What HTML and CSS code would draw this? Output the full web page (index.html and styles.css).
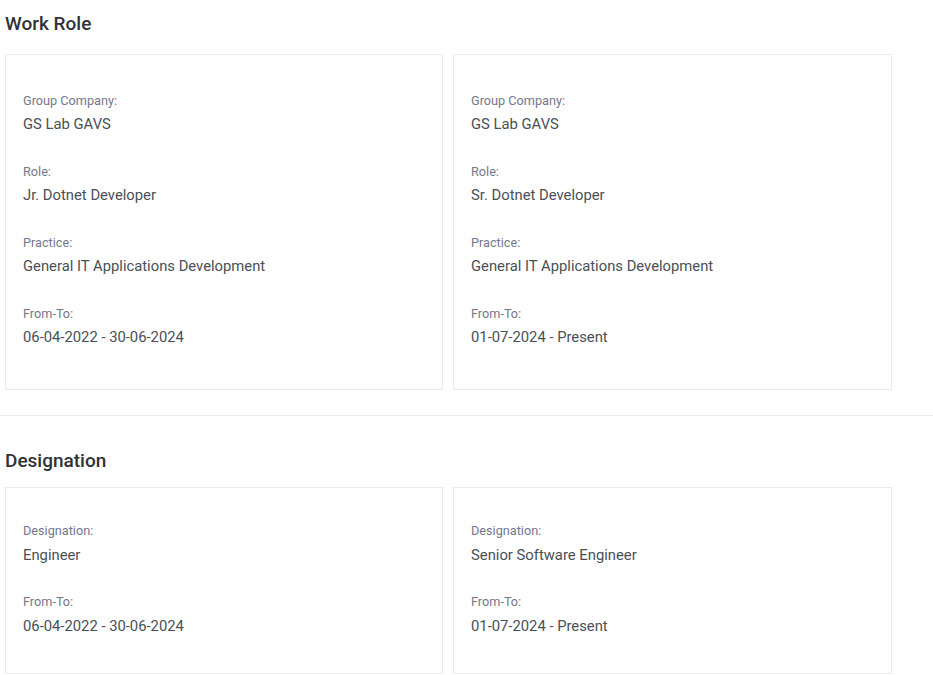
FILE: index.html
```html
<!DOCTYPE html>
<html lang="en">
<head>
<meta charset="utf-8">
<title>Work Role</title>
<link rel="stylesheet" href="styles.css">
</head>
<body>
<section class="section section--first">
  <h2 class="section-title">Work Role</h2>
  <div class="card-row">
    <div class="card card--tall">
      <div class="field"><div class="field-label">Group Company:</div><div class="field-value">GS Lab GAVS</div></div>
      <div class="field"><div class="field-label">Role:</div><div class="field-value">Jr. Dotnet Developer</div></div>
      <div class="field"><div class="field-label">Practice:</div><div class="field-value">General IT Applications Development</div></div>
      <div class="field"><div class="field-label">From-To:</div><div class="field-value">06-04-2022 - 30-06-2024</div></div>
    </div>
    <div class="card card--tall">
      <div class="field"><div class="field-label">Group Company:</div><div class="field-value">GS Lab GAVS</div></div>
      <div class="field"><div class="field-label">Role:</div><div class="field-value">Sr. Dotnet Developer</div></div>
      <div class="field"><div class="field-label">Practice:</div><div class="field-value">General IT Applications Development</div></div>
      <div class="field"><div class="field-label">From-To:</div><div class="field-value">01-07-2024 - Present</div></div>
    </div>
  </div>
</section>
<hr class="divider">
<section class="section section--second">
  <h2 class="section-title section-title--tight">Designation</h2>
  <div class="card-row">
    <div class="card card--short">
      <div class="field"><div class="field-label">Designation:</div><div class="field-value">Engineer</div></div>
      <div class="field"><div class="field-label">From-To:</div><div class="field-value">06-04-2022 - 30-06-2024</div></div>
    </div>
    <div class="card card--short">
      <div class="field"><div class="field-label">Designation:</div><div class="field-value">Senior Software Engineer</div></div>
      <div class="field"><div class="field-label">From-To:</div><div class="field-value">01-07-2024 - Present</div></div>
    </div>
  </div>
</section>
</body>
</html>
```
FILE: styles.css
```css
* { box-sizing: border-box; }
html, body {
  margin: 0;
  padding: 0;
  background: #ffffff;
  font-family: Roboto, "Liberation Sans", sans-serif;
}
.section--first { padding-top: 12px; }
.section--second { padding-top: 33.2px; }
.section-title {
  margin: 0 0 19px;
  padding-left: 5px;
  font-size: 19px;
  line-height: 23px;
  font-weight: 500;
  color: #2f3237;
}
.section-title--tight { margin-bottom: 15.3px; }
.card-row {
  display: grid;
  grid-template-columns: 438px 439px;
  gap: 10px;
  padding-left: 5px;
}
.card {
  border: 1px solid #e9e9ef;
  background: #fff;
  padding: 35.5px 17px 40.75px;
  display: flex;
  flex-direction: column;
  gap: 26.75px;
}
.card--short { padding-top: 33.5px; padding-bottom: 36.25px; }
.field {
  display: flex;
  flex-direction: column;
  gap: 3.25px;
}
.field-label {
  font-size: 12.7px;
  line-height: 19px;
  color: #74788d;
}
.field-value {
  font-size: 14.8px;
  line-height: 22px;
  color: #495057;
}
.divider {
  margin: 25px 0 0;
  border: 0;
  border-top: 1px solid #e9e9ef;
  height: 0;
}
```
